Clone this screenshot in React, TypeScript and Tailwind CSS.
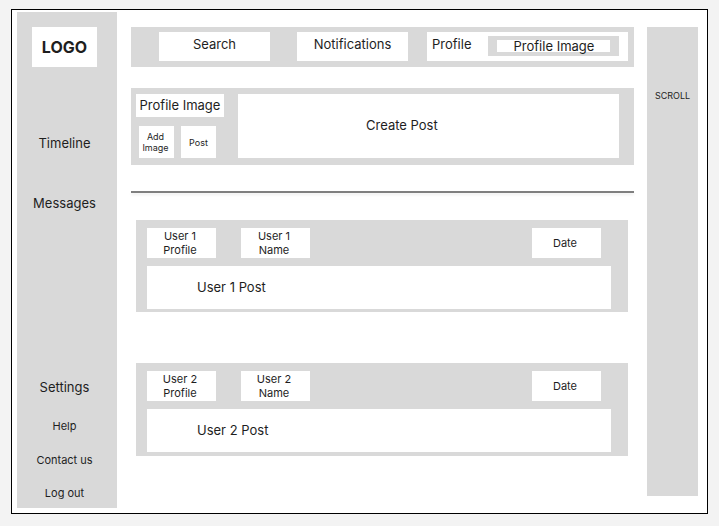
const font = { fontFamily: "Inter, 'Liberation Sans', sans-serif" };

function Box({ className, children }: { className: string; children?: React.ReactNode }) {
  return <div className={`bg-white ${className}`}>{children}</div>;
}

function UserCard({ n, className }: { n: number; className: string }) {
  return (
    <div className={`ml-[5px] flex w-[492px] flex-col bg-[#d9d9d9] pl-[11px] pt-[8px] ${className}`}>
      <div className="flex h-[30px] items-center text-center text-[11px] leading-[14px]">
        <Box className="flex h-full w-[69px] items-center justify-center pr-[3px]">
          <span>
            User {n}
            <br />
            Profile
          </span>
        </Box>
        <Box className="ml-[25px] flex h-full w-[69px] items-center justify-center pr-[3px]">
          <span>
            User {n}
            <br />
            Name
          </span>
        </Box>
        <Box className="ml-[222px] flex h-full w-[69px] items-center justify-center pr-[3px]">Date</Box>
      </div>
      <Box className="mt-[8px] flex h-[43px] w-[464px] items-center pl-[50px] text-[13px]">User {n} Post</Box>
    </div>
  );
}

export default function App() {
  return (
    <div className="min-h-[526px] bg-[#f3f3f3] pl-[11px] pt-[9px] text-[#1e1e1e]" style={font}>
      <div className="flex h-[505px] w-[697px] border border-black bg-white pl-[5px] pt-[2px]">
        {/* sidebar */}
        <div className="flex h-[496px] w-[100px] flex-col items-center bg-[#d9d9d9] pr-[5px] pt-[15px]">
          <div className="flex h-[40px] w-[65px] items-center justify-center bg-white text-[16px] font-bold">LOGO</div>
          <span className="mt-[66px] block text-[13px] leading-[20px]">Timeline</span>
          <span className="mt-[40px] block text-[13px] leading-[20px]">Messages</span>
          <span className="mt-[164px] block text-[13px] leading-[20px]">Settings</span>
          <span className="mt-[21px] block text-[11px] leading-[16px]">Help</span>
          <span className="mt-[18px] block text-[11px] leading-[16px]">Contact us</span>
          <span className="mt-[17px] block text-[11px] leading-[16px]">Log out</span>
        </div>

        {/* main */}
        <div className="ml-[14px] flex w-[503px] flex-col pt-[15px]">
          <div className="flex h-[40px] bg-[#d9d9d9] pl-[28px] pt-[5px] text-[13px] leading-[16px]">
            <Box className="h-[29px] w-[111px] pt-[4px] text-center">Search</Box>
            <Box className="ml-[27px] h-[29px] w-[111px] pt-[4px] text-center">Notifications</Box>
            <Box className="ml-[19px] flex h-[29px] w-[201px] items-start pl-[5px] pt-[4px]">
              <span>Profile</span>
              <div className="ml-[17px] h-[20px] w-[131px] bg-[#d9d9d9] px-[9px] pt-[4px]">
                <div className="h-[12px] bg-white text-center text-[13px] leading-[13px]">Profile Image</div>
              </div>
            </Box>
          </div>

          <div className="mt-[21px] flex h-[77px] bg-[#d9d9d9] pl-[5px] pt-[6px]">
            <div className="flex flex-col">
              <Box className="flex h-[23px] w-[88px] items-center justify-center text-[13px]">Profile Image</Box>
              <div className="ml-[3px] mt-[9px] flex gap-[7px] text-center text-[9px] leading-[11px]">
                <Box className="flex h-[32px] w-[35px] items-center justify-center pr-[2px]">
                  <span>
                    Add
                    <br />
                    Image
                  </span>
                </Box>
                <Box className="flex h-[32px] w-[35px] items-center justify-center">Post</Box>
              </div>
            </div>
            <Box className="ml-[14px] flex h-[64px] w-[381px] items-center pl-[128px] text-[13px]">Create Post</Box>
          </div>

          <div className="mt-[26px] h-[2px] bg-[#7f7f7f] shadow-[0_2px_3px_rgba(0,0,0,0.08)]" />

          <UserCard n={1} className="mt-[27px] h-[92px]" />
          <UserCard n={2} className="mt-[51px] h-[93px]" />
        </div>

        {/* scroll */}
        <div className="ml-[13px] mt-[15px] h-[469px] w-[51px] bg-[#d9d9d9] pt-[62px] text-center text-[9px]">SCROLL</div>
      </div>
    </div>
  );
}
